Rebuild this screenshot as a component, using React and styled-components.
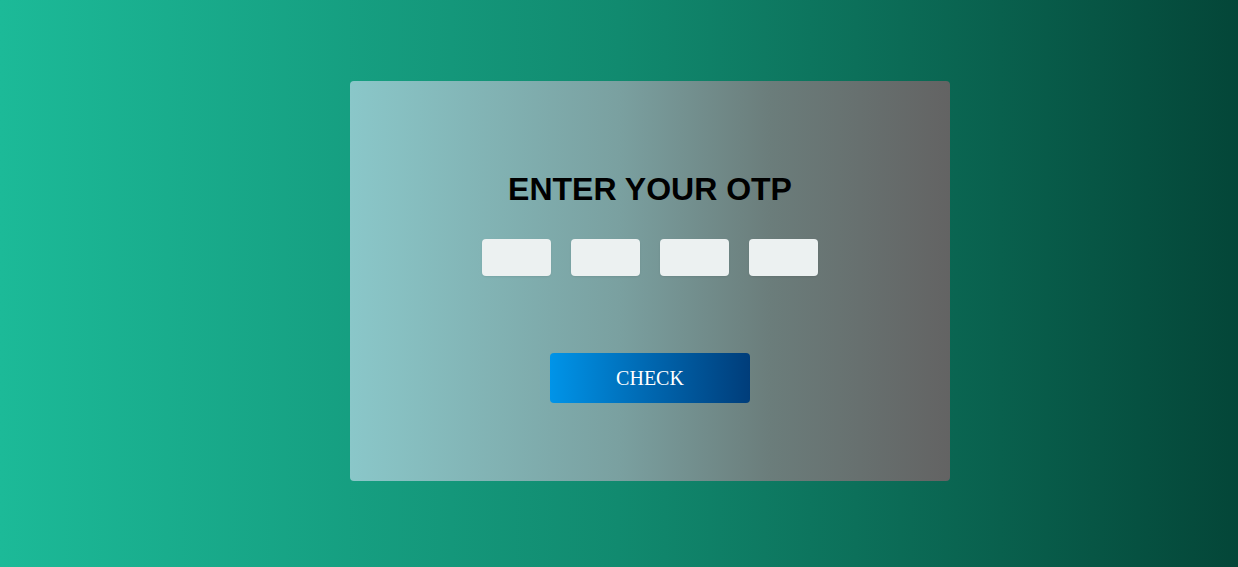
import React from "react";
import styled, { createGlobalStyle } from "styled-components";

const Global = createGlobalStyle`
  html, body { margin: 0; padding: 0; }
  body { font-family: "Liberation Sans", Arial, sans-serif; }
`;

const Page = styled.div`
  width: 100%;
  height: 567px;
  box-sizing: border-box;
  padding: 0 0 5px 62px;
  display: flex;
  align-items: center;
  justify-content: center;
  background: linear-gradient(to right, #1cba98 0%, #118a6f 50%, #044638 100%);
`;

const Card = styled.div`
  width: 600px;
  height: 400px;
  box-sizing: border-box;
  border-radius: 4px;
  background: linear-gradient(to right, #8ac7c9 0%, #7aa0a0 45%, #6b7d7b 70%, #636363 100%);
  display: flex;
  flex-direction: column;
  align-items: center;
  padding-top: 90px;
`;

const Title = styled.h1`
  margin: 0;
  font-family: "Liberation Sans", Arial, sans-serif;
  font-weight: 700;
  font-size: 32px;
  line-height: 37px;
  color: #000;
`;

const Inputs = styled.div`
  display: flex;
  gap: 20px;
  margin-top: 31px;
`;

const Digit = styled.input`
  width: 69px;
  height: 37px;
  box-sizing: border-box;
  border: none;
  border-radius: 4px;
  background: #ecf1f1;
  outline: none;
  text-align: center;
  font-size: 18px;
  box-shadow: 0 1px 2px rgba(0, 0, 0, 0.08);
`;

const Button = styled.button`
  margin-top: 77px;
  width: 200px;
  height: 50px;
  border: none;
  border-radius: 4px;
  background: linear-gradient(to right, #0094e8 0%, #0067b0 50%, #003d7a 100%);
  color: #fff;
  font-family: "Liberation Serif", "Times New Roman", serif;
  font-size: 20px;
  cursor: pointer;
`;

export default function App() {
  return (
    <>
      <Global />
      <Page>
        <Card>
          <Title>ENTER YOUR OTP</Title>
          <Inputs>
            <Digit maxLength={1} />
            <Digit maxLength={1} />
            <Digit maxLength={1} />
            <Digit maxLength={1} />
          </Inputs>
          <Button>CHECK</Button>
        </Card>
      </Page>
    </>
  );
}
